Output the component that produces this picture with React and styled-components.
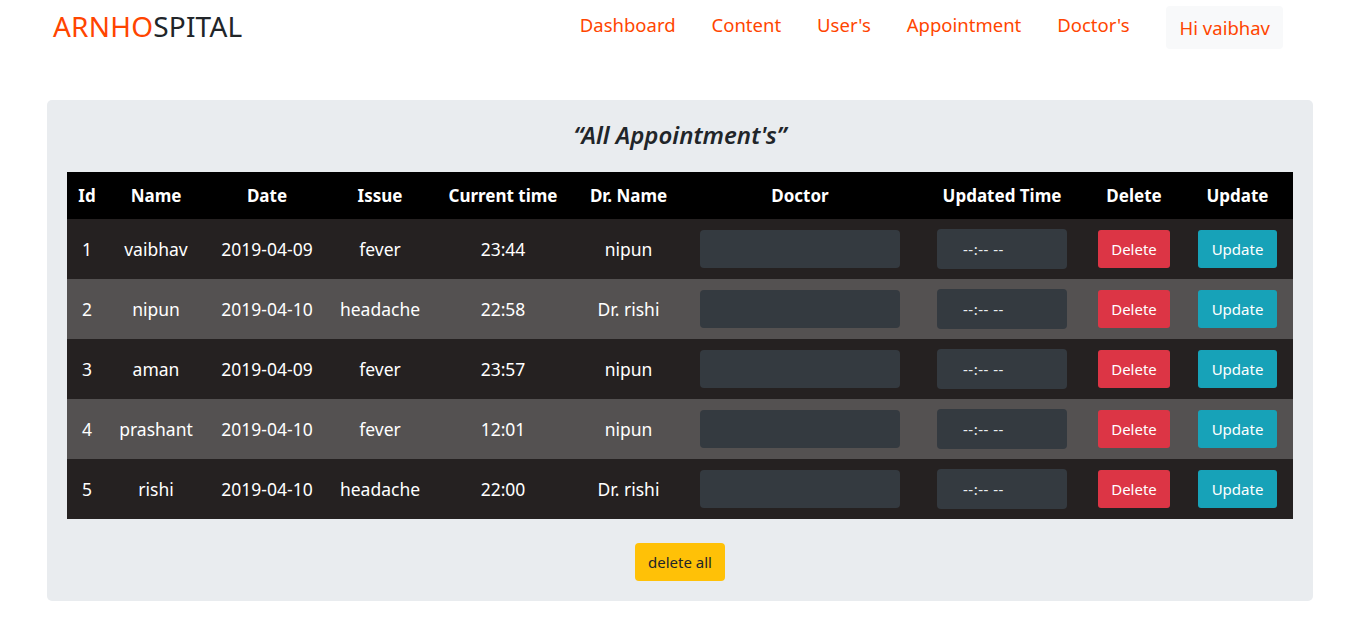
import React from 'react'
import styled, { createGlobalStyle } from 'styled-components'

const GlobalStyle = createGlobalStyle`
    body {
        margin: 0;
        background: #fff;
        font-family: "Noto Sans", "Open Sans", sans-serif;
        color: #212529;
    }
`

const Nav = styled.nav`
    display: flex;
    align-items: flex-start;
    justify-content: space-between;
    padding: 6px 80px 0 53px;
    height: 100px;
    box-sizing: border-box;
`
const Logo = styled.div`
    font-size: 28px;
    line-height: 30px;
    margin-top: 5px;
    letter-spacing: 0.2px;
    color: #212529;
    span {
        color: orangered;
    }
`
const Menu = styled.ul`
    display: flex;
    align-items: flex-start;
    list-style: none;
    margin: 0;
    padding: 0;
`
const MenuItem = styled.li`
    font-size: 18.5px;
    line-height: 26px;
    color: orangered;
    padding: 6px 18px 0;
    white-space: nowrap;
    cursor: pointer;
`
const Greeting = styled.li`
    font-size: 18.5px;
    line-height: 26px;
    color: orangered;
    background: #f8f9fa;
    border-radius: 4px;
    padding: 9px 13px 8px 14px;
    margin-left: 18px;
`

const Panel = styled.section`
    margin: 0 50px 0 47px;
    background: #e9ecef;
    border-radius: 5px;
    padding: 17px 20px 20px;
    display: flex;
    flex-direction: column;
    align-items: center;
`
const Title = styled.h2`
    margin: 0 0 19px;
    font-size: 24px;
    line-height: 36px;
    font-style: italic;
    font-weight: 600;
    color: #212529;
`
const Table = styled.table`
    width: 100%;
    table-layout: fixed;
    border-collapse: collapse;
    color: #fff;
`
const Head = styled.th`
    background: #000;
    height: 47px;
    padding: 0;
    font-size: 17px;
    font-weight: 700;
    text-align: center;
    white-space: nowrap;
`
const Row = styled.tr`
    background: ${p => (p.$odd ? '#252121' : '#545151')};
`
const Cell = styled.td`
    height: 60px;
    padding: 0;
    font-size: 17.5px;
    text-align: center;
    vertical-align: middle;
    white-space: nowrap;
`
const DarkInput = styled.div`
    display: inline-flex;
    align-items: center;
    box-sizing: border-box;
    width: ${p => p.$w}px;
    height: ${p => p.$h}px;
    background: #343a40;
    border-radius: 4px;
    padding-left: 26px;
    font-size: 15px;
    color: #e9ecef;
    letter-spacing: 0.5px;
    vertical-align: middle;
`
const Button = styled.button`
    font-family: inherit;
    font-size: 15px;
    color: #fff;
    border: 0;
    border-radius: 3px;
    height: 38px;
    padding: 0 ${p => p.$pad}px;
    background: ${p => p.$bg};
    cursor: pointer;
    vertical-align: middle;
`
const DeleteAll = styled.button`
    margin-top: 24px;
    font-family: inherit;
    font-size: 15px;
    color: #212529;
    background: #ffc107;
    border: 0;
    border-radius: 4px;
    height: 38px;
    padding: 0 13px;
`

const cols = [
    ['Id', 40], ['Name', 98], ['Date', 124], ['Issue', 102], ['Current time', 144],
    ['Dr. Name', 107], ['Doctor', 236], ['Updated Time', 168], ['Delete', 96], ['Update', 111],
]

const rows = [
    [1, 'vaibhav', '2019-04-09', 'fever', '23:44', 'nipun'],
    [2, 'nipun', '2019-04-10', 'headache', '22:58', 'Dr. rishi'],
    [3, 'aman', '2019-04-09', 'fever', '23:57', 'nipun'],
    [4, 'prashant', '2019-04-10', 'fever', '12:01', 'nipun'],
    [5, 'rishi', '2019-04-10', 'headache', '22:00', 'Dr. rishi'],
]

const App = () => {
    return (
        <>
            <GlobalStyle />
            <Nav>
                <Logo><span>ARNHO</span>SPITAL</Logo>
                <Menu>
                    <MenuItem>Dashboard</MenuItem>
                    <MenuItem>Content</MenuItem>
                    <MenuItem>User's</MenuItem>
                    <MenuItem>Appointment</MenuItem>
                    <MenuItem>Doctor's</MenuItem>
                    <Greeting>Hi vaibhav</Greeting>
                </Menu>
            </Nav>
            <Panel>
                <Title>“All Appointment's”</Title>
                <Table>
                    <colgroup>
                        {cols.map(([n, w]) => <col key={n} style={{ width: w }} />)}
                    </colgroup>
                    <thead>
                        <tr>
                            {cols.map(([n]) => <Head key={n}>{n}</Head>)}
                        </tr>
                    </thead>
                    <tbody>
                        {rows.map((r, i) => (
                            <Row key={r[0]} $odd={i % 2 === 0}>
                                {r.map((v, j) => <Cell key={j}>{v}</Cell>)}
                                <Cell><DarkInput $w={200} $h={38} /></Cell>
                                <Cell><DarkInput $w={130} $h={40}>--:-- --</DarkInput></Cell>
                                <Cell><Button $bg="#dc3545" $pad={13}>Delete</Button></Cell>
                                <Cell><Button $bg="#17a2b8" $pad={14}>Update</Button></Cell>
                            </Row>
                        ))}
                    </tbody>
                </Table>
                <DeleteAll>delete all</DeleteAll>
            </Panel>
        </>
    )
}

export default App
